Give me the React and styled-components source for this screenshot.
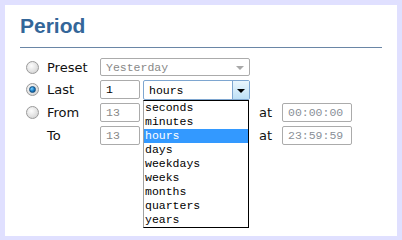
import React from "react";
import styled, { createGlobalStyle } from "styled-components";

const Global = createGlobalStyle`
  body {
    margin: 0;
    background: #e0e0ff;
    font-family: "DejaVu Sans", Verdana, sans-serif;
  }
`;

const Panel = styled.div`
  margin: 5px;
  height: 231px;
  background: #fff;
  padding: 9px 15px 0 15px;
  box-sizing: border-box;
`;

const Title = styled.h2`
  margin: 0;
  font-family: "Liberation Sans", Arial, sans-serif;
  font-size: 21px;
  font-weight: bold;
  color: #336699;
  line-height: 24px;
`;

const Rule = styled.div`
  margin-top: 9px;
  border-top: 1px solid #6a86a6;
`;

const Rows = styled.div`
  margin-top: 10px;
  display: flex;
  flex-direction: column;
  gap: 4px;
`;

const Row = styled.div`
  display: flex;
  align-items: flex-start;
  height: ${(p) => p.h || 19}px;
  position: relative;
`;

const RadioSlot = styled.div`
  width: 27px;
  height: 19px;
  display: flex;
  align-items: center;
`;

const Radio = styled.span`
  margin-left: 6px;
  width: 11px;
  height: 11px;
  border-radius: 50%;
  border: 1px solid #9a9a9a;
  background: radial-gradient(circle at 40% 35%, #fdfdfd 0%, #e2e2e2 55%, #c8c8c8 100%);
  display: flex;
  align-items: center;
  justify-content: center;
  &::after {
    content: "";
    display: ${(p) => (p.checked ? "block" : "none")};
    width: 5px;
    height: 5px;
    border-radius: 50%;
    background: radial-gradient(circle at 35% 35%, #7fd0ff 0%, #1a7fc8 50%, #0a3f78 100%);
    border: 1px solid #15507f;
  }
`;

const Label = styled.span`
  width: 53px;
  height: 19px;
  line-height: 19px;
  font-size: 13px;
  color: #111;
`;

const Field = styled.div`
  width: ${(p) => p.w}px;
  height: ${(p) => p.h || 19}px;
  box-sizing: border-box;
  border: 1px solid ${(p) => p.border || "#ababab"};
  border-radius: 2px;
  padding-left: 5px;
  display: flex;
  align-items: center;
  font-family: "Liberation Mono", "Courier New", monospace;
  font-size: 11.5px;
  color: ${(p) => p.color || "#888"};
  margin-left: ${(p) => p.ml || 0}px;
  position: relative;
  background: #fff;
`;

const GrayArrow = styled.span`
  position: absolute;
  right: 5px;
  top: 7px;
  border-left: 4px solid transparent;
  border-right: 4px solid transparent;
  border-top: 4px solid #a8a8a8;
`;

const ArrowButton = styled.span`
  position: absolute;
  right: 0;
  top: 0;
  bottom: 0;
  width: 16px;
  border-left: 1px solid #7ea6d0;
  background: linear-gradient(#eaf6fd, #bde0f6);
  display: flex;
  align-items: center;
  justify-content: center;
  &::after {
    content: "";
    border-left: 4px solid transparent;
    border-right: 4px solid transparent;
    border-top: 4px solid #000;
    margin-top: 1px;
  }
`;

const At = styled.span`
  font-size: 13px;
  height: 19px;
  line-height: 19px;
  color: #111;
  margin-left: ${(p) => p.ml}px;
  width: 23px;
`;

const List = styled.ul`
  position: absolute;
  left: 123px;
  top: 20px;
  width: 106px;
  margin: 0;
  padding: 0;
  list-style: none;
  box-sizing: border-box;
  background: #fff;
  border: 1px solid #000;
  border-left-color: #a0a0a0;
  z-index: 2;
  font-family: "Liberation Mono", "Courier New", monospace;
  font-size: 11.5px;
`;

const Item = styled.li`
  height: 14px;
  line-height: 14px;
  padding-left: 1px;
  color: ${(p) => (p.active ? "#fff" : "#000")};
  background: ${(p) => (p.active ? "#3399ff" : "transparent")};
`;

const units = ["seconds", "minutes", "hours", "days", "weekdays", "weeks", "months", "quarters", "years"];

export default function App() {
  return (
    <>
      <Global />
      <Panel>
        <Title>Period</Title>
        <Rule />
        <Rows>
          <Row h={18}>
            <RadioSlot><Radio /></RadioSlot>
            <Label>Preset</Label>
            <Field w={150} h={18}>
              Yesterday
              <GrayArrow />
            </Field>
          </Row>
          <Row>
            <RadioSlot><Radio checked /></RadioSlot>
            <Label>Last</Label>
            <Field w={40} color="#000">1</Field>
            <Field w={107} h={20} ml={3} color="#000" border="#7ea6d0">
              hours
              <ArrowButton />
            </Field>
            <List>
              {units.map((u) => (
                <Item key={u} active={u === "hours"}>{u}</Item>
              ))}
            </List>
          </Row>
          <Row>
            <RadioSlot><Radio /></RadioSlot>
            <Label>From</Label>
            <Field w={40}>13</Field>
            <At ml={119}>at</At>
            <Field w={70} color="#8a9098">00:00:00</Field>
          </Row>
          <Row>
            <RadioSlot />
            <Label>To</Label>
            <Field w={40}>13</Field>
            <At ml={119}>at</At>
            <Field w={70} color="#8a9098">23:59:59</Field>
          </Row>
        </Rows>
      </Panel>
    </>
  );
}
